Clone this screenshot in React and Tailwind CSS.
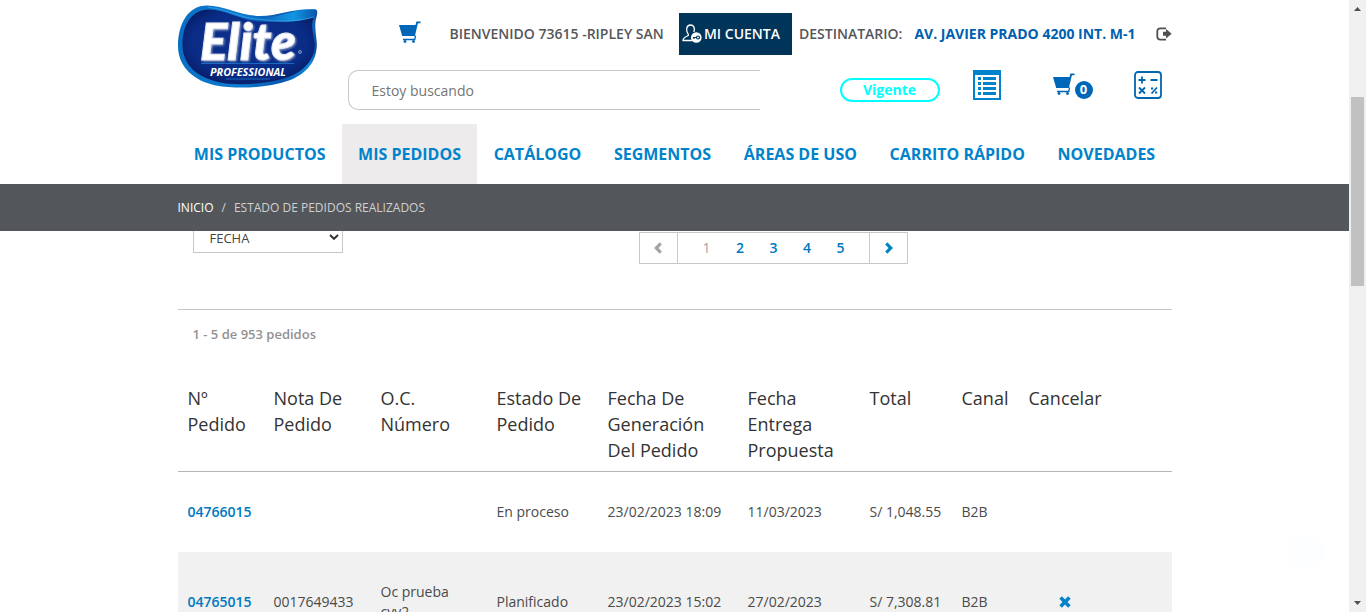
import React from 'react';

const NAV = [
  { label: 'MIS PRODUCTOS' },
  { label: 'MIS PEDIDOS', active: true },
  { label: 'CATÁLOGO' },
  { label: 'SEGMENTOS' },
  { label: 'ÁREAS DE USO' },
  { label: 'CARRITO RÁPIDO' },
  { label: 'NOVEDADES' },
];

const HEADINGS = [
  'Nº Pedido',
  'Nota De Pedido',
  'O.C. Número',
  'Estado De Pedido',
  'Fecha De Generación Del Pedido',
  'Fecha Entrega Propuesta',
  'Total',
  'Canal',
  'Cancelar',
];

const ORDERS = [
  {
    id: '04766015',
    note: '',
    oc: '',
    status: 'En proceso',
    created: '23/02/2023 18:09',
    delivery: '11/03/2023',
    total: 'S/ 1,048.55',
    channel: 'B2B',
    cancelable: false,
  },
  {
    id: '04765015',
    note: '0017649433',
    oc: 'Oc prueba cvv2',
    status: 'Planificado',
    created: '23/02/2023 15:02',
    delivery: '27/02/2023',
    total: 'S/ 7,308.81',
    channel: 'B2B',
    cancelable: true,
  },
];

function Logo() {
  return (
    <svg viewBox="0 0 140 84" className="h-[84px] w-[140px]" role="img" aria-label="Elite Professional">
      <defs>
        <linearGradient id="rim" x1="0" y1="0" x2="1" y2="0">
          <stop offset="0" stopColor="#0a6fc4" />
          <stop offset="0.45" stopColor="#0b7bd0" />
          <stop offset="0.75" stopColor="#0a58ad" />
          <stop offset="0.95" stopColor="#0e8bdc" />
          <stop offset="1" stopColor="#0a3f94" />
        </linearGradient>
        <radialGradient id="body" cx="0.5" cy="0.45" r="0.62">
          <stop offset="0" stopColor="#0d3190" />
          <stop offset="0.7" stopColor="#0a2c86" />
          <stop offset="1" stopColor="#06185c" />
        </radialGradient>
        <linearGradient id="ribbon" x1="0" y1="0" x2="1" y2="0">
          <stop offset="0" stopColor="#0b62b6" />
          <stop offset="0.6" stopColor="#1296e4" />
          <stop offset="1" stopColor="#0a55a8" />
        </linearGradient>
      </defs>
      <path
        d="M29 0.5C47 0.5 62 11 82 11C101 11 116 3 137 4.500C140 5 139.500 8 138.500 12C136 20 138 28 138.800 38C139.500 58 126 70 111 75.500C88 83.500 58 84 38 80.500C16 76 0 62 0 41C0 19 10 0.500 29 0.500Z"
        fill="url(#rim)"
      />
      <path
        d="M31 4.500C50 5 63 16 84 16.500C103 17 117 17 136 12C132 21 136 30 136.800 39C137 56 124 67 109 72.500C88 79.500 58 81 40 77C20 72 5 61 4.500 41C4 21 13 4.500 31 4.500Z"
        fill="url(#body)"
      />
      <path d="M80 13C99 14 114 4 137 4.500C140 5 139 9 137.500 11.500C117 19 99 17 80 13Z" fill="url(#ribbon)" />
      <path d="M30 2.500C48 3 62 14 84 14.500C100 17 118 17 136 12" fill="none" stroke="#3fa9ee" strokeWidth="0.700" />
      <path d="M23 58.500H116M48 74H92" stroke="#126bc4" strokeWidth="1" />
      <text
        x="22"
        y="55"
        fontFamily="Lato, sans-serif"
        fontStyle="italic"
        fontSize="51"
        fontWeight="900"
        fill="#ffffff"
        stroke="#e4e8f2"
        strokeWidth="1"
        className="drop-shadow-[1px_1px_1px_#8f9fc4]"
      >
        Elite
      </text>
      <text x="32" y="70.500" fontFamily="'Open Sans', sans-serif" fontStyle="italic" fontSize="10.800" fontWeight="700" fill="#ffffff">
        PROFESSIONAL
      </text>
      <circle cx="122" cy="47" r="1.400" fill="none" stroke="#c5d0ea" strokeWidth="0.700" />
    </svg>
  );
}

function Cart() {
  return (
    <svg viewBox="0 0 22 22" className="h-[22px] w-[22px] shrink-0" aria-hidden="true" fill="#0067b8">
      <path d="M0 4H16.500L17.400 0.400H21.500V2.200H18.900L15.900 15H3.200Z" />
      <path d="M4 17.800H15.200L15.900 14.500H17.200L16.300 19.200H4Z" />
      <circle cx="6" cy="20.500" r="1.400" />
      <circle cx="14.500" cy="20.500" r="1.400" />
    </svg>
  );
}

function UserKey() {
  return (
    <svg viewBox="0 0 20 20" className="h-5 w-5 shrink-0" aria-hidden="true">
      <path
        d="M10 16.500H1C1 14 2.500 13.200 5.500 12C6.600 11.500 6.600 10.300 5.800 9.300C4 6.800 4 1 8.500 1C12.500 1 13 5.500 11.800 8"
        fill="none"
        stroke="#fff"
        strokeWidth="1.300"
      />
      <circle cx="14.300" cy="13.500" r="5.300" fill="#fff" />
      <circle cx="16" cy="13.500" r="1.500" fill="none" stroke="#003459" strokeWidth="1.200" />
      <path d="M11 13.500H14.500M12 13.500V15" stroke="#003459" strokeWidth="1.200" />
    </svg>
  );
}

function SignOut() {
  return (
    <svg viewBox="0 0 16 14" className="h-3.5 w-4" aria-hidden="true">
      <path d="M10 1.300H4.500Q1.300 1.300 1.300 4.500V9.500Q1.300 12.700 4.500 12.700H10" fill="none" stroke="#505050" strokeWidth="1.800" />
      <path d="M7 4.700H10V1.900L15.700 6.800L10 11.500V8.800H7Z" fill="#505050" />
    </svg>
  );
}

function ListIcon() {
  return (
    <svg viewBox="0 0 28 30" className="h-[30px] w-7" aria-hidden="true" fill="#0083cb">
      <path fillRule="evenodd" d="M0 0H28V30H0ZM2 5V28H26V5Z" />
      <path d="M5 7H8V10H5ZM10 7H23V10H10ZM5 12H8V15H5ZM10 12H23V15H10ZM5 17H8V20H5ZM10 17H23V20H10ZM5 22H8V25H5ZM10 22H23V25H10Z" />
    </svg>
  );
}

function Calculator() {
  return (
    <svg viewBox="0 0 28 28" className="h-7 w-7" aria-hidden="true" fill="none" stroke="#0067b1" strokeWidth="1.800">
      <rect x="1" y="1" width="26" height="26" rx="3" />
      <path d="M4.500 9H11.500M8 5.500V12.500M16.500 9H23.500M5 16.500L11 22.500M11 16.500L5 22.500M17.500 22.500L23 16.500" />
      <path d="M17 17.500H19.200M21 21.500H23.200" strokeWidth="2.200" />
    </svg>
  );
}

function Chevron({ right, className }) {
  return (
    <svg viewBox="0 0 8 12" className={className} aria-hidden="true" fill="currentColor">
      {right ? (
        <path d="M2.300 0.300L8 6L2.300 11.700L0.200 9.600L3.500 6L0.200 2.400Z" />
      ) : (
        <path d="M5.700 0.300L0 6L5.700 11.700L7.800 9.600L4.500 6L7.800 2.400Z" />
      )}
    </svg>
  );
}

function Remove() {
  return (
    <svg viewBox="0 0 12 12" className="h-3 w-3" aria-hidden="true" stroke="#0083cb" strokeWidth="3.600">
      <path d="M1.600 1.600L10.400 10.400M10.400 1.600L1.600 10.400" />
    </svg>
  );
}

function Header() {
  return (
    <header className="mx-auto w-full max-w-[994px]">
      <div className="flex h-31 items-start gap-[30px]">
        <a href="#inicio" className="mt-[5px] shrink-0">
          <Logo />
        </a>
        <div className="min-w-0 flex-1">
          <div className="mt-[13px] flex h-[42px] items-center text-sm font-semibold whitespace-nowrap text-[#55575b]">
            <a href="#carrito" aria-label="Carrito" className="mr-[29px] ml-[51px] pb-1">
              <Cart />
            </a>
            <span>BIENVENIDO 73615 -RIPLEY SAN</span>
            <button type="button" className="mr-[7px] ml-auto flex h-full items-center gap-[2px] bg-[#003459] pr-3 pl-[3px] text-white">
              <UserKey />
              MI CUENTA
            </button>
            <span>DESTINATARIO:</span>
            <a href="#direccion" className="ml-3 font-bold text-[#0060b0]">
              AV. JAVIER PRADO 4200 INT. M-1
            </a>
            <a href="#salir" aria-label="Cerrar sesión" className="ml-5">
              <SignOut />
            </a>
          </div>
          <div className="mt-[15px] flex items-center">
            <input
              type="text"
              aria-label="Buscar productos"
              placeholder="Estoy buscando"
              className="h-10 min-w-0 flex-1 rounded-l-[10px] border border-r-0 border-[#c8c8c8] px-[23px] text-sm placeholder:text-[#757575]"
            />
            <span className="ml-20 flex h-6 w-[100px] items-center justify-center rounded-full border-2 border-[#00ffff] text-sm font-bold text-[#00ffff]">
              Vigente
            </span>
            <a href="#lista" aria-label="Listas" className="mb-[10px] ml-[33px]">
              <ListIcon />
            </a>
            <a href="#carro" className="mb-2 ml-[52px] flex items-end text-[#0067b8]">
              <span className="mb-1">
                <Cart />
              </span>
              <span className="flex h-[18px] w-[18px] items-center justify-center rounded-full bg-[#0067b8] text-[13px] font-bold text-white">0</span>
            </a>
            <a href="#calculadora" aria-label="Calculadora" className="mr-[10px] mb-[10px] ml-[41px]">
              <Calculator />
            </a>
          </div>
        </div>
      </div>
      <nav className="flex h-15 text-base font-bold whitespace-nowrap text-[#0083cb]">
        {NAV.map((item) => (
          <a
            key={item.label}
            href="#menu"
            className={
              item.active
                ? 'flex flex-auto items-center justify-center bg-[#edebec] px-4'
                : 'flex flex-auto items-center justify-center px-4'
            }
          >
            {item.label}
          </a>
        ))}
      </nav>
    </header>
  );
}

function Toolbar() {
  return (
    <div className="-mt-[7px] flex h-[86px] items-start border-b border-[#c8c8c8] px-[15px]">
      <div className="relative flex-none">
        <select
          aria-label="Ordenar por"
          className="h-[29px] w-[150px] appearance-none border border-[#c8c8c8] bg-white px-4 text-[13px] text-[#444]"
        >
          <option>FECHA</option>
        </select>
        <svg viewBox="0 0 10 6" className="pointer-events-none absolute top-[10px] right-1 h-1.5 w-2.5" aria-hidden="true">
          <path d="M1 1L5 4.800L9 1" fill="none" stroke="#333" strokeWidth="2" />
        </svg>
      </div>
      <nav
        aria-label="Paginación"
        className="mt-2 ml-[296px] flex h-8 border border-[#c8c8c8] text-sm font-semibold text-[#0078c1]"
      >
        <button type="button" disabled aria-label="Anterior" className="flex w-[38px] items-center justify-center border-r border-[#c8c8c8] text-[#a3a3a3]">
          <Chevron className="h-3 w-2" />
        </button>
        <div className="flex w-[192px] items-center justify-between border-r border-[#c8c8c8] pr-6 pl-[25px]">
          <span className="font-normal text-[#a3a3a3]">1</span>
          <a href="#2">2</a>
          <a href="#3">3</a>
          <a href="#4">4</a>
          <a href="#5">5</a>
        </div>
        <button type="button" aria-label="Siguiente" className="flex w-[37px] items-center justify-center pl-[2px] text-[#0083cb]">
          <Chevron right className="h-3 w-2" />
        </button>
      </nav>
    </div>
  );
}

function OrdersTable() {
  return (
    <table className="w-full table-fixed text-left text-sm">
      <colgroup>
        <col className="w-[86px]" />
        <col className="w-[107px]" />
        <col className="w-[116px]" />
        <col className="w-[111px]" />
        <col className="w-[140px]" />
        <col className="w-[122px]" />
        <col className="w-[92px]" />
        <col className="w-[67px]" />
        <col className="w-[92px]" />
        <col />
      </colgroup>
      <thead>
        <tr className="border-b border-[#b5b5b5] align-top text-lg/[26px] text-[#333]">
          {HEADINGS.map((heading) => (
            <th key={heading} scope="col" className="px-[10px] py-2 font-normal">
              {heading}
            </th>
          ))}
          <td />
        </tr>
      </thead>
      <tbody>
        {ORDERS.map((order) => (
          <tr key={order.id} className="text-[#4a4a4a] even:bg-[#f1f1f1]">
            <td className="px-[10px] py-[30px]">
              <a href="#pedido" className="font-semibold text-[#0078c1]">
                {order.id}
              </a>
            </td>
            <td className="px-[10px]">{order.note}</td>
            <td className="py-[30px] pr-5 pl-[10px]">{order.oc}</td>
            <td className="px-[10px]">{order.status}</td>
            <td className="pl-[10px] whitespace-nowrap">{order.created}</td>
            <td className="px-[10px]">{order.delivery}</td>
            <td className="pl-[10px] whitespace-nowrap">{order.total}</td>
            <td className="px-[10px]">{order.channel}</td>
            <td className="px-[10px]">
              {order.cancelable && (
                <button type="button" aria-label="Cancelar pedido" className="mx-auto block">
                  <Remove />
                </button>
              )}
            </td>
            <td />
          </tr>
        ))}
      </tbody>
    </table>
  );
}

function Scrollbar() {
  return (
    <div aria-hidden="true" className="flex w-[17px] shrink-0 flex-col items-center justify-between bg-[#f0f0f0] py-[7px]">
      <svg viewBox="0 0 7 4" className="h-1 w-[7px]" fill="#505050">
        <path d="M3.500 0L7 4H0Z" />
      </svg>
      <div className="flex w-full flex-1 flex-col px-[2px]">
        <div className="basis-[86px]" />
        <div className="basis-[32%] bg-[#c1c1c1]" />
      </div>
      <svg viewBox="0 0 7 4" className="h-1 w-[7px]" fill="#505050">
        <path d="M0 0H7L3.500 4Z" />
      </svg>
    </div>
  );
}

export default function App() {
  return (
    <div className="flex h-screen overflow-hidden bg-white font-['Open_Sans',sans-serif]">
      <div className="relative flex min-w-0 flex-1 flex-col">
        <Header />
        <div className="bg-[#53565a]">
          <nav aria-label="Ruta" className="mx-auto flex h-[47px] w-full max-w-[994px] items-center gap-2 text-xs text-[#d0d0d0]">
            <a href="#inicio" className="text-white">
              INICIO
            </a>
            <span>/</span>
            <span>ESTADO DE PEDIDOS REALIZADOS</span>
          </nav>
        </div>
        <div className="min-h-0 flex-1 overflow-hidden">
          <main className="mx-auto w-full max-w-[994px]">
            <Toolbar />
            <p className="px-[15px] pt-[14px] pb-[33px] text-[13px]/5 font-semibold text-[#929292]">1 - 5 de 953 pedidos</p>
            <OrdersTable />
          </main>
        </div>
        <button
          type="button"
          aria-label="Volver arriba"
          className="absolute right-[25px] bottom-[41px] flex h-[38px] w-[38px] items-center justify-center rounded-full bg-[#fcfeff]"
        >
          <svg viewBox="0 0 14 10" className="h-2.5 w-3.5" aria-hidden="true" fill="#fff">
            <path d="M7 0L14 7L12 9L7 5L2 9L0 7Z" />
          </svg>
        </button>
      </div>
      <Scrollbar />
    </div>
  );
}
